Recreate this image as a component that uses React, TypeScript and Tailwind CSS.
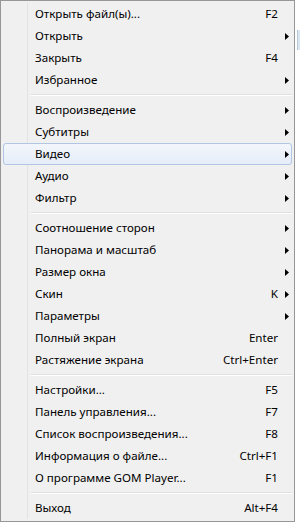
type Item = { label: string; shortcut?: string; sub?: boolean; active?: boolean } | "sep";

const items: Item[] = [
  { label: "Открыть файл(ы)...", shortcut: "F2" },
  { label: "Открыть", sub: true },
  { label: "Закрыть", shortcut: "F4" },
  { label: "Избранное", sub: true },
  "sep",
  { label: "Воспроизведение", sub: true },
  { label: "Субтитры", sub: true },
  { label: "Видео", sub: true, active: true },
  { label: "Аудио", sub: true },
  { label: "Фильтр", sub: true },
  "sep",
  { label: "Соотношение сторон", sub: true },
  { label: "Панорама и масштаб", sub: true },
  { label: "Размер окна", sub: true },
  { label: "Скин", shortcut: "K", sub: true },
  { label: "Параметры", sub: true },
  { label: "Полный экран", shortcut: "Enter" },
  { label: "Растяжение экрана", shortcut: "Ctrl+Enter" },
  "sep",
  { label: "Настройки...", shortcut: "F5" },
  { label: "Панель управления...", shortcut: "F7" },
  { label: "Список воспроизведения...", shortcut: "F8" },
  { label: "Информация о файле...", shortcut: "Ctrl+F1" },
  { label: "О программе GOM Player...", shortcut: "F1" },
  "sep",
  { label: "Выход", shortcut: "Alt+F4" },
];

const Arrow = () => (
  <svg width="4" height="7" viewBox="0 0 4 7" className="block">
    <path d="M0 0 L4 3.5 L0 7 Z" fill="#000" />
  </svg>
);

export default function App() {
  return (
    <div className="relative w-[300px] h-[522px] bg-white overflow-hidden">
      {/* window behind the menu */}
      <div className="absolute left-[297px] top-[30px] w-[3px] h-[20px] bg-[#dbe6f3] border-l border-[#b8c8dc]" />

      <div
        className="relative w-[295px] h-[522px] border border-[#979797] bg-[#f0f0f0] p-[2px] text-[11.6px] text-black"
        style={{ fontFamily: '"Noto Sans", "Open Sans", sans-serif' }}
      >
        {/* gutter line */}
        <div className="absolute left-[26px] top-[2px] bottom-[2px] w-px border-l border-[#e2e3e3] bg-white" />

        {items.map((it, i) =>
          it === "sep" ? (
            <div key={i} className="h-[8px] pl-[28px] flex flex-col justify-center">
              <div className="h-px bg-[#e0e0e0]" />
              <div className="h-px bg-white" />
            </div>
          ) : (
            <div
              key={i}
              className={
                it.active
                  ? "relative h-[22px] flex items-center rounded-[3px] border border-[#b0c6e4] bg-gradient-to-b from-[#f3f6fb] to-[#e6edf8]"
                  : "relative h-[22px] flex items-center border border-transparent"
              }
            >
              <span className="pl-[31px] flex-1 whitespace-nowrap leading-none">{it.label}</span>
              {it.shortcut && <span className="whitespace-nowrap leading-none">{it.shortcut}</span>}
              <span className="w-[13px] flex pl-[7px]">{it.sub && <Arrow />}</span>
            </div>
          )
        )}
      </div>
    </div>
  );
}
